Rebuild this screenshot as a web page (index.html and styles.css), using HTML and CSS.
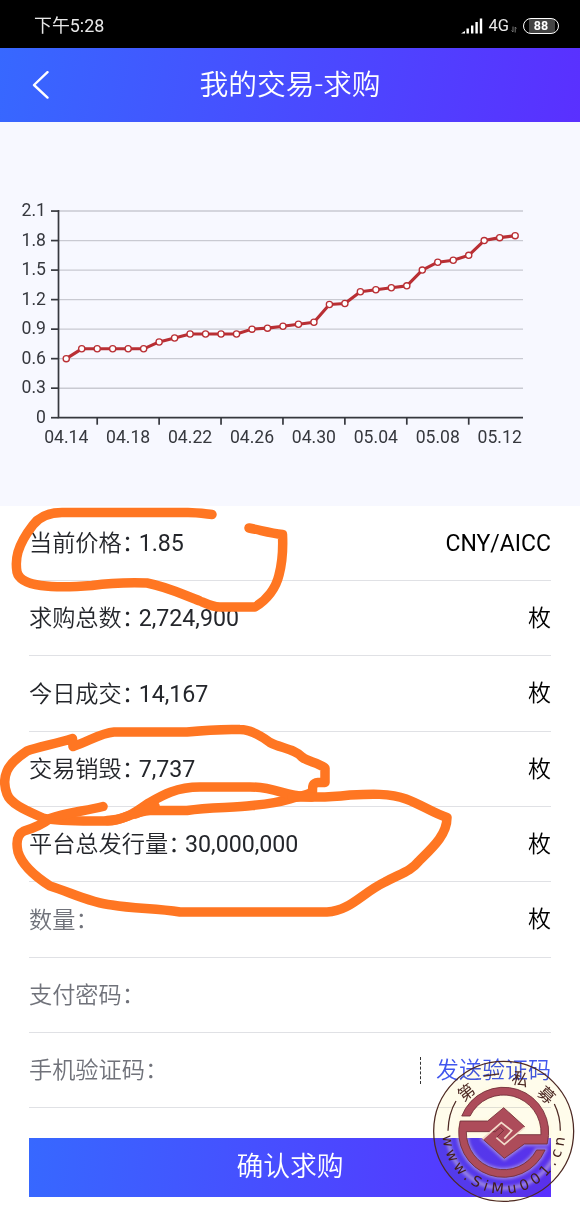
FILE: index.html
```html
<!DOCTYPE html>
<html lang="zh-CN">
<head>
  <meta charset="UTF-8">
  <meta name="viewport" content="width=device-width, initial-scale=1.0">
  <title>我的交易-求购</title>
  <link rel="stylesheet" href="styles.css">
</head>
<body>
  <div class="status">
    <span class="time">下午5:28</span>
    <svg class="signal" width="22" height="16" viewBox="0 0 22 16" fill="#fff">
      <path d="M0 15.5L4 13V15.5Z"/>
      <rect x="5.5" y="10.5" width="2.4" height="5"/>
      <rect x="10" y="7.5" width="2.4" height="8"/>
      <rect x="14.4" y="4" width="2.4" height="11.5"/>
      <rect x="18.8" y="0.5" width="2.4" height="15"/>
    </svg>
    <span class="net">4G</span>
    <svg class="data" width="6" height="7" viewBox="0 0 6 7" fill="none" stroke="#777" stroke-width="1">
      <path d="M2 0.5V6L0.5 4.5M4.2 6.5V1L5.6 2.5"/>
    </svg>
    <span class="battery"><b>88</b></span>
  </div>

  <header class="header">
    <svg class="back" width="18" height="28" viewBox="0 0 18 28" fill="none" stroke="#fff" stroke-width="2.4" stroke-linecap="round" stroke-linejoin="round">
      <path d="M15.5 1.2L2 14L15.5 26.6"/>
    </svg>
    <h1>我的交易-求购</h1>
  </header>

  <div class="chart">
    <svg id="chart" width="580" height="384" viewBox="0 122 580 384"></svg>
  </div>

  <div class="form">
    <div class="row"><span class="label">当前价格<i>：</i></span><span class="value">1.85</span><span class="unit pair">CNY/AICC</span></div>
    <div class="row"><span class="label">求购总数<i>：</i></span><span class="value">2,724,900</span><span class="unit">枚</span></div>
    <div class="row"><span class="label">今日成交<i>：</i></span><span class="value">14,167</span><span class="unit">枚</span></div>
    <div class="row"><span class="label">交易销毁<i>：</i></span><span class="value">7,737</span><span class="unit">枚</span></div>
    <div class="row"><span class="label">平台总发行量<i>：</i></span><span class="value">30,000,000</span><span class="unit">枚</span></div>
    <div class="row input"><span class="label">数量<i>：</i></span><span class="unit">枚</span></div>
    <div class="row input"><span class="label">支付密码<i>：</i></span></div>
    <div class="row input"><span class="label">手机验证码<i>：</i></span><a class="send">发送验证码</a></div>
    <button class="submit">确认求购</button>
  </div>

  <!-- hand-drawn marks -->
  <svg class="marks" width="580" height="1207" viewBox="0 0 580 1207">
    <path d="M212 514.5C203 513.5 196 512.5 188 512.5H62C48 512.5 39 517 33 525C26 534 21 542 18 552C16 559 16 566 17 572C19 580 30 584 41 585.5C55 587.5 80 586.5 92 585.5C110 583 130 582.5 147 583C168 587 184 595 200 601C208 604.5 213 607 220 607H255C267 600 276 588 279 575C283 560 283 545 282.5 534.5C270 533 260 530 249 528"/>
    <path d="M73 746.5L72.5 738.5C55 744 38 747 27 751C18 757 10 764 7 771C4 778 4 786 7 794C11 805 30 812 43 818C60 822 90 821 108 821C122 821 134 811 150 810.5H187C210 807 235 808 252 805.5C268 804 280 802 290 799C300 796 308 795 312.5 792C312.5 787 312 783 318 782.5H325V768C317 762 308 762 302 757C295 749 280 748 270 742.5C260 735 250 729.5 240 729.5C220 729 205 730 187 732H114C100 733 88 742 73 746.5"/>
    <path d="M103 806.5C85 811 65 813 50 818.5C43 824 34 828 24 831C16 835 16 843 18 852C22 865 36 877 50 886C70 892 90 903 112 905C135 909 155 908 180 912H327C350 911 362 893 385 882C402 873 411 871 419 861C432 848 447 835 447 817.5C433 813 422 805 406 799C390 793 370 794 350 795C332 797 320 798 305 796.5C285 796 275 787 250 787H200C175 787 161 796 147 804C133 814 124 820 107 820.5"/>
    <path d="M292 797H312M135 814L155 806"/>
  </svg>

  <!-- site stamp -->
  <svg class="stamp" width="145" height="145" viewBox="95 60 435 435">
    <defs>
      <filter id="glow" x="-10%" y="-10%" width="120%" height="120%"><feGaussianBlur stdDeviation="5"/></filter>
      <path id="ring-text" d="M126 277A184 184 0 0 0 494 277"/>
      <g id="emblem">
        <path d="M184.2 228A135 135 0 0 1 440.4 312H372L312 355L247 297L303 246L334 272L312 296L322 303L350 284H421.8A112 112 0 0 0 209.3 228Z"/>
        <path d="M179.4 243H262L310 203L373 260L313 313L288 293L310 271L300 262L285 275H198A112 112 0 0 0 408.7 330H434.2A135 135 0 0 1 179.4 243Z"/>
      </g>
    </defs>
    <g class="halo" filter="url(#glow)">
      <use href="#emblem"/>
      <path d="M142 277A168 168 0 0 0 478 277" fill="none"/>
    </g>
    <use href="#emblem" class="emblem"/>
    <path class="hook" d="M247 297L303 248L334 272L312 296M288 293L312 313L373 262"/>
    <circle class="line" cx="310" cy="274" r="210"/>
    <path class="line" d="M143 272C144 238 152 208 167 183M480 272C480 242 474 216 462 192"/>
    <text class="url"><textPath href="#ring-text" startOffset="10" textLength="552">www.SiMu001.cn</textPath></text>
    <g class="name">
      <text transform="translate(198 157) rotate(-38)" y="18">第</text>
      <text transform="translate(274 106) rotate(-8)" y="18">一</text>
      <text transform="translate(360 117) rotate(15)" y="18">私</text>
      <text transform="translate(438 165) rotate(43)" y="18">募</text>
    </g>
  </svg>
  <div class="stamp-tint"></div>

  <script>
    const prices = [0.6, 0.7, 0.7, 0.7, 0.7, 0.7, 0.77, 0.81, 0.85, 0.85, 0.85, 0.85, 0.9, 0.91, 0.93,
      0.95, 0.97, 1.15, 1.16, 1.28, 1.3, 1.32, 1.34, 1.5, 1.58, 1.6, 1.65, 1.8, 1.83, 1.85];
    const dates = ['04.14', '04.18', '04.22', '04.26', '04.30', '05.04', '05.08', '05.12'];
    const left = 58.5, right = 523, bottom = 417.7, step = 15.48;
    const x = i => left + step * (i + 0.5);
    const y = v => bottom - v * 98.4;

    let svg = '';
    for (let i = 0; i < 8; i++) {
      const v = i * 0.3;
      if (i) svg += `<path class="grid" d="M${left} ${y(v)}H${right}"/>`;
      svg += `<path class="axis" d="M51 ${y(v)}H${left}"/>`;
      svg += `<text class="tick" x="46" y="${y(v) + 5}" text-anchor="end">${i ? v.toFixed(1) : 0}</text>`;
    }
    svg += `<path class="axis" d="M${left} ${y(2.1) - 1}V${bottom}H${right}"/>`;
    dates.forEach((d, i) => {
      if (i < 7) svg += `<path class="axis" d="M${x(2 + i * 4)} ${bottom}v7"/>`;
      svg += `<text class="tick" x="${x(i * 4)}" y="443" text-anchor="middle">${d}</text>`;
    });
    svg += `<polyline class="price" points="${prices.map((p, i) => x(i) + ',' + y(p)).join(' ')}"/>`;
    prices.forEach((p, i) => {
      svg += `<circle class="dot" cx="${x(i)}" cy="${y(p)}" r="3.1"/>`;
    });
    document.getElementById('chart').innerHTML = svg;
  </script>
</body>
</html>
```
FILE: styles.css
```css
* { box-sizing: border-box; }
body { position: relative; margin: 0; width: 580px; height: 1207px; overflow: hidden; background: #fff; font-family: Roboto, "Noto Sans CJK SC", sans-serif; }

.status { display: flex; align-items: center; height: 48px; padding: 3px 21px 0 34px; background: #000; color: #e8e8e8; }
.time { flex: 1; font-size: 17.9px; line-height: 20px; }
.net { margin-left: 5px; font-size: 16.5px; }
.data { margin: 7px 6px 0 2px; }
.battery { display: flex; align-items: center; justify-content: center; width: 36px; height: 16px; border: 1.5px solid #fff; border-radius: 8px; background: linear-gradient(90deg, #000 16%, #444 16%, #444 90%, #000 90%); color: #fff; font-size: 12.5px; }

.header { display: flex; align-items: center; height: 74px; padding: 0 32px; background: linear-gradient(100deg, #3768ff, #5a30ff); color: #fff; }
.header h1 { flex: 1; margin: 0 18px 0 0; text-align: center; font-size: 28.8px; font-weight: 350; line-height: 74px; }

.chart { height: 383.5px; background: #f7f8ff; }
.chart svg { display: block; }
.grid { stroke: #c9cad2; stroke-width: 1.4; }
.axis { fill: none; stroke: #36383e; stroke-width: 1.7; }
.tick { fill: #36383e; font-size: 17.6px; }
.price { fill: none; stroke: #b92f34; stroke-width: 3.1; stroke-linejoin: round; }
.dot { fill: #fff; stroke: #b92f34; stroke-width: 1.3; }

.form { padding: 0 29px; }
.row { display: flex; align-items: center; height: 75.35px; padding-top: 0.5px; border-bottom: 1.5px solid #e0e1e5; color: #24262b; font-size: 23.2px; line-height: 34px; }
.label { font-weight: 350; }
.label i { font-style: normal; letter-spacing: -6.3px; }
.unit { margin-left: auto; padding-top: 1.5px; color: #000; font-size: 23px; font-weight: 350; }
.pair { font-weight: 400; }
.input .label { color: #70727a; }
.send { margin-left: auto; padding-left: 15px; border-left: 1.5px dashed #333; color: #4156ee; font-size: 23px; font-weight: 350; line-height: 27px; }
.submit { display: block; width: 100%; height: 59px; margin-top: 29.5px; padding: 0; border: 0; background: linear-gradient(95deg, #3768ff, #5a30ff); color: #fff; font: 350 26.8px/59px Roboto, "Noto Sans CJK SC", sans-serif; }

.marks { position: absolute; left: 0; top: 0; fill: none; stroke: #ff7622; stroke-width: 9.5; stroke-linecap: round; stroke-linejoin: round; pointer-events: none; }

.stamp { position: absolute; left: 431.7px; top: 1060px; pointer-events: none; }
.stamp-tint { position: absolute; left: 433px; top: 1061px; width: 141px; height: 141px; border-radius: 50%; background: #fffceb; mix-blend-mode: multiply; pointer-events: none; }
.halo { fill: #fffbe8; stroke: #fffbe8; stroke-width: 12; opacity: 0.4; }
.emblem { fill: #ad4d62; stroke: #6d2b3a; stroke-width: 2.5; }
.hook { fill: none; stroke: #f3dfdc; stroke-width: 5; }
.line { fill: none; stroke: #4d2926; stroke-width: 3.8; }
.url { fill: #43201f; font-family: "DejaVu Sans", sans-serif; font-size: 44px; }
.name text { fill: #4d2926; font-family: "Noto Sans CJK SC", sans-serif; font-size: 50px; text-anchor: middle; }
```
